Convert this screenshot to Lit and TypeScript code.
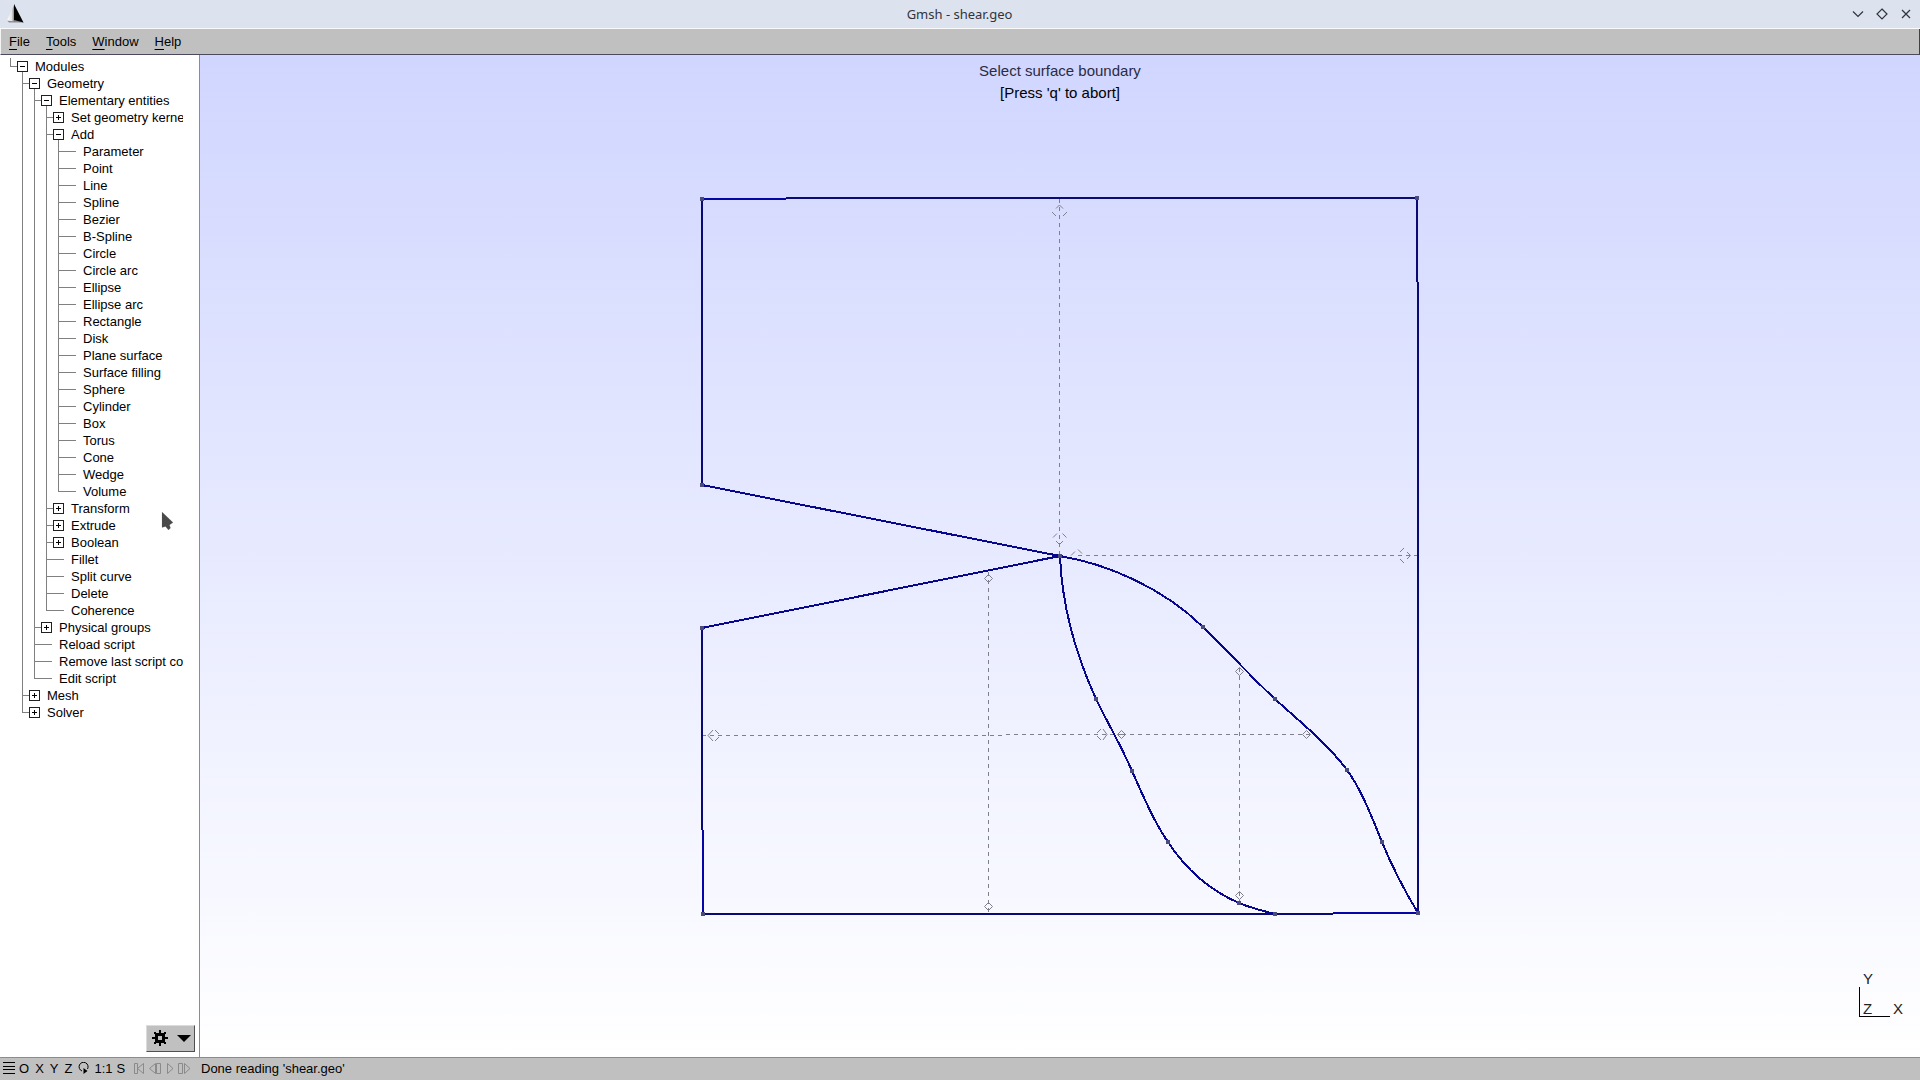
import { LitElement, html, svg, css, nothing, type TemplateResult } from "lit";
import { customElement, property, state } from "lit/decorators.js";

interface TreeNode {
  label: string;
  children?: TreeNode[];
  open?: boolean;
}

const leaf = (label: string): TreeNode => ({ label });
const closed = (label: string): TreeNode => ({ label, children: [], open: false });
const open = (label: string, children: TreeNode[]): TreeNode => ({ label, children, open: true });

const MODULES: TreeNode = open("Modules", [
  open("Geometry", [
    open("Elementary entities", [
      closed("Set geometry kernel"),
      open(
        "Add",
        [
          "Parameter", "Point", "Line", "Spline", "Bezier", "B-Spline", "Circle",
          "Circle arc", "Ellipse", "Ellipse arc", "Rectangle", "Disk",
          "Plane surface", "Surface filling", "Sphere", "Cylinder", "Box",
          "Torus", "Cone", "Wedge", "Volume",
        ].map(leaf),
      ),
      closed("Transform"),
      closed("Extrude"),
      closed("Boolean"),
      leaf("Fillet"),
      leaf("Split curve"),
      leaf("Delete"),
      leaf("Coherence"),
    ]),
    closed("Physical groups"),
    leaf("Reload script"),
    leaf("Remove last script command"),
    leaf("Edit script"),
  ]),
  closed("Mesh"),
  closed("Solver"),
]);

@customElement("module-tree")
export class ModuleTree extends LitElement {
  @property({ attribute: false }) root: TreeNode = MODULES;

  static styles = css`
    :host {
      display: block;
      overflow: hidden;
    }
    ul {
      list-style: none;
      margin: 0;
      padding: 0 0 0 12px;
    }
    .root {
      padding: 0 0 0 10px;
    }
    li {
      background: linear-gradient(#808080, #808080) no-repeat 0 0 / 1px 100%;
    }
    li:last-child {
      background-size: 1px 9px;
    }
    .row {
      display: flex;
      align-items: center;
      gap: 7px;
      width: 100%;
      height: 17px;
      margin: 0;
      padding: 0;
      border: 0;
      background: none;
      font: 13px/17px "Liberation Sans", Arial, sans-serif;
      color: #000;
      text-align: left;
      white-space: nowrap;
    }
    .row.open {
      background: linear-gradient(#808080, #808080) no-repeat 12px 14px / 1px 3px;
    }
    .mark {
      flex: none;
      display: block;
    }
  `;

  private toggle(node: TreeNode) {
    if (node.children) {
      node.open = !node.open;
      this.requestUpdate();
    }
  }

  private mark(node: TreeNode) {
    const branch = node.children !== undefined;
    return html`<svg class="mark" width="18" height="17" viewBox="0 0 18 17" aria-hidden="true" shape-rendering="crispEdges">
      <path d=${branch ? "M0 8.5H7" : "M0 8.5H18"} stroke="#808080" />
      ${branch
        ? svg`<rect x="7.5" y="3.5" width="10" height="10" fill="#fff" stroke="#202020" />
            <path d=${node.open ? "M10 8.5h5" : "M10 8.5h5M12.5 6v5"} stroke="#000" />`
        : nothing}
    </svg>`;
  }

  private item(node: TreeNode): TemplateResult {
    const branch = node.children !== undefined;
    return html`<li role="none">
      <button
        class="row ${node.open ? "open" : ""}"
        role="treeitem"
        aria-expanded=${branch ? String(!!node.open) : nothing}
        @click=${() => this.toggle(node)}
      >${this.mark(node)}<span>${node.label}</span></button>
      ${node.open ? html`<ul role="group">${node.children!.map((c) => this.item(c))}</ul>` : nothing}
    </li>`;
  }

  render() {
    return html`<ul class="root" role="tree" aria-label="Modules">${this.item(this.root)}</ul>`;
  }
}

const OUTLINE = [
  "M786 198H1417",
  "M1417 197V282",
  "M1418 282V914",
  "M703 914H1333",
  "M702 628V830",
  "M702 198V485",
].join("");

const OUTLINE_LIGHT = "M702 199H786M703 830V914M1333 913H1418";

const NOTCH = "M702 485L1060 556L702 628";

const SPLINES = [
  "M1060 556C1108 564 1163 588 1203 627C1227 650 1251 677 1275 699C1299 721 1327 743 1347 770C1361 789 1371 815 1382 842C1393 869 1406 893 1418 913",
  "M1060 556C1062 608 1076 655 1096 699C1108 724 1121 745 1132 771C1142 793 1153 821 1168 842C1185 868 1209 890 1239 903C1251 908 1263 911 1275 914",
].join("");

const POINTS: [number, number][] = [
  [702, 199], [1417, 198], [702, 485], [702, 628], [1060, 556],
  [1203, 627], [1275, 699], [1347, 770], [1382, 842], [1418, 913],
  [1096, 699], [1132, 771], [1168, 842], [1239, 903], [1275, 914], [703, 914],
];

const CROSSES = [
  "M1059.5 199V556",
  "M1418 555.5H1074",
  "M988.5 572V914",
  "M702 735.5H1003",
  "M1006 734.5H1122",
  "M1122 734.5H1314",
  "M1239.5 668V904",
].join("");

/* Small diamonds close the short surface crosses; HANDLES holds the larger, broken ones. */
const SMALL_DIAMONDS: [number, number][] = [
  [988.5, 578.5], [988.5, 906.5], [1239.5, 671.5], [1239.5, 895.5], [1121.5, 734.5], [1306.5, 734.5],
];

const HANDLES = [
  "M1056 208.5l3.5-3.5l3.5 3.5M1052 212l4 4M1067 212l-4 4",
  "M1056 541l3.5 3.5l3.5-3.5M1053 537.5l4-4M1066.5 537.5l-4-4",
  "M1071 555.5l4-4M1078 549.5l4 4",
  "M1407 552l3.5 3.5l-3.5 3.5M1404 548l-4 4M1404 563l-4-4",
  "M713 730l-5 5.5l5 5.5M715 730l4 4M715 741l4-4",
  "M1101 729l-4 4M1103 729l4 5.5l-4 5.5M1101 740l-4-4",
].join("");

@customElement("geometry-view")
export class GeometryView extends LitElement {
  static styles = css`
    :host {
      display: grid;
      background: linear-gradient(#d0d6ff, #fff);
      overflow: hidden;
    }
    .scene,
    .prompt {
      grid-area: 1 / 1;
    }
    .scene {
      width: 100%;
      height: 100%;
      min-height: 0;
      display: block;
    }
    .prompt {
      justify-self: center;
      align-self: start;
      margin: 0;
      padding: 5px 0 0;
      font: 15px/22px "Liberation Sans", Arial, sans-serif;
      color: #000;
      text-align: center;
    }
    .message {
      color: #2a2c42;
      display: block;
    }
    .axis {
      font: 15px "Liberation Sans", Arial, sans-serif;
      fill: #222;
    }
  `;

  render() {
    return html`
      <svg class="scene" viewBox="200 55 1720 1002" role="img" aria-label="shear.geo">
        <g fill="none" stroke="#80808c" stroke-width="1">
          <path d=${CROSSES} stroke-dasharray="4 4" shape-rendering="crispEdges" />
          ${SMALL_DIAMONDS.map(([x, y]) => svg`<path d=${`M${x - 4} ${y}l4-4l4 4l-4 4z`} />`)}
          <path d=${HANDLES} />
        </g>
        <g fill="none" stroke-width="2" shape-rendering="crispEdges">
          <path d=${OUTLINE} stroke="#0a0a74" />
          <path d=${OUTLINE_LIGHT} stroke="#0606a8" />
          <path d=${NOTCH} stroke="#06068e" />
          <path d=${SPLINES} stroke="#06068e" />
        </g>
        <g fill="#4c4c7c">
          ${POINTS.map(([x, y]) => svg`<rect x=${x - 2} y=${y - 2} width="4" height="4" />`)}
        </g>
        <path d="M1859.5 987V1016.5H1890" fill="none" stroke="#000" shape-rendering="crispEdges" />
        <g class="axis">
          <text x="1863" y="984">Y</text>
          <text x="1863" y="1014">Z</text>
          <text x="1893" y="1014">X</text>
        </g>
      </svg>
      <p class="prompt"><span class="message">Select surface boundary</span>[Press 'q' to abort]</p>
    `;
  }
}

@customElement("app-root")
export class AppRoot extends LitElement {
  @state() private status = "Done reading 'shear.geo'";

  static styles = css`
    :host {
      display: flex;
      flex-direction: column;
      height: 100vh;
      background: #fff;
      font: 13px/17px "Liberation Sans", Arial, sans-serif;
      color: #000;
    }
    button {
      margin: 0;
      padding: 0;
      border: 0;
      background: none;
      font: inherit;
      color: inherit;
      display: block;
    }
    svg {
      display: block;
    }
    .titlebar {
      display: grid;
      grid-template-columns: 1fr auto 1fr;
      align-items: center;
      height: 28px;
      padding: 0 8px 0 7px;
      background: #dde3ee;
      border-bottom: 1px solid #fafafa;
      color: #30343c;
    }
    .title {
      margin: 0;
      font: 13px/18px "Noto Sans", sans-serif;
    }
    .window-buttons {
      display: flex;
      justify-content: flex-end;
      gap: 12px;
    }
    .menubar {
      display: flex;
      gap: 16px;
      height: 25px;
      align-items: center;
      padding: 0 8px;
      background: #c0c0c0;
      border-left: 1px solid #f4f4f4;
      border-right: 1px solid #404048;
      border-bottom: 1px solid #4a4a5c;
    }
    .menubar u {
      text-underline-offset: 3px;
    }
    .workspace {
      flex: 1;
      min-height: 0;
      display: grid;
      grid-template-columns: 200px 1fr;
    }
    .sidebar {
      display: flex;
      flex-direction: column;
      min-height: 0;
      padding: 3px 0 5px;
      border-right: 1px solid #8c8c8c;
    }
    .tree {
      flex: 1;
      min-height: 0;
      margin-right: 16px;
    }
    .options {
      align-self: flex-end;
      display: flex;
      align-items: center;
      margin-right: 4px;
      height: 27px;
      box-sizing: border-box;
      padding: 0 3px 1px 5px;
      gap: 9px;
      background: #c0c0c0;
      border: 1px solid;
      border-color: #dcdcdc #505050 #505050 #dcdcdc;
    }
    .statusbar {
      display: flex;
      align-items: center;
      height: 22px;
      padding: 0 3px;
      box-sizing: border-box;
      background: #c0c0c0;
      border-top: 1px solid #8c8c8c;
      line-height: 15px;
      padding-bottom: 2px;
      min-height: 23px;
    }
    .views {
      display: flex;
      align-items: center;
      gap: 4px;
      width: 198px;
    }
    .axes {
      display: flex;
      gap: 6px;
      padding-right: 2px;
    }
    .player {
      display: flex;
      gap: 4px;
      padding-left: 4px;
    }
    .pointer {
      position: absolute;
      left: 161px;
      top: 511px;
      pointer-events: none;
    }
  `;

  render() {
    return html`
      <header class="titlebar">
        <svg width="18" height="20" viewBox="0 0 18 20" aria-hidden="true">
          <defs>
            <linearGradient id="face" x1="0" y1="0" x2="1" y2="0">
              <stop offset="0" stop-color="#fff" /><stop offset="0.6" stop-color="#e4e4e4" /><stop offset="1" stop-color="#777" />
            </linearGradient>
          </defs>
          <path d="M0 16.5L8 15L17 18.5H2Z" fill="#666" opacity="0.7" />
          <path d="M7.5 0L0 16.500L7.500 17.500Z" fill="url(#face)" />
          <path d="M7 0L16.500 18.500L7 16Z" fill="#000" />
        </svg>
        <h1 class="title">Gmsh - shear.geo</h1>
        <div class="window-buttons">
          <button aria-label="Minimize"><svg width="12" height="12" viewBox="0 0 12 12" fill="none" stroke="#30343c" stroke-width="1.200"><path d="M1 3.500L6 8.500L11 3.500" /></svg></button>
          <button aria-label="Maximize"><svg width="12" height="12" viewBox="0 0 12 12" fill="none" stroke="#30343c" stroke-width="1.200"><path d="M6 1L11 6L6 11L1 6Z" /></svg></button>
          <button aria-label="Close"><svg width="12" height="12" viewBox="0 0 12 12" fill="none" stroke="#30343c" stroke-width="1.200"><path d="M2 2L10 10M10 2L2 10" /></svg></button>
        </div>
      </header>
      <nav class="menubar">
        <button><u>F</u>ile</button>
        <button><u>T</u>ools</button>
        <button><u>W</u>indow</button>
        <button><u>H</u>elp</button>
      </nav>
      <main class="workspace">
        <aside class="sidebar">
          <module-tree class="tree"></module-tree>
          <button class="options" aria-label="Options">
            <svg width="16" height="16" viewBox="0 0 16 16" shape-rendering="crispEdges" aria-hidden="true">
              <rect x="4.500" y="4.500" width="7" height="7" fill="none" stroke="#000" stroke-width="3" />
              <path d="M7 0h2v3H7zM7 13h2v3H7zM0 7h3v2H0zM13 7h3v2h-3zM2 2h2v2H2zM12 2h2v2h-2zM2 12h2v2H2zM12 12h2v2h-2z" />
            </svg>
            <svg width="14" height="7" viewBox="0 0 14 7" aria-hidden="true"><path d="M0 0H14L7 7Z" /></svg>
          </button>
        </aside>
        <geometry-view></geometry-view>
      </main>
      <footer class="statusbar">
        <div class="views">
          <button aria-label="Menu"><svg width="12" height="12" viewBox="0 0 12 12" stroke="#000" shape-rendering="crispEdges"><path d="M0 .5h12M0 4.500h12M0 7.500h12M0 11.500h12" /></svg></button>
          <div class="axes">
            <button>O</button>
            <button>X</button>
            <button>Y</button>
            <button>Z</button>
          </div>
          <button aria-label="Rotate"><svg width="12" height="12" viewBox="0 0 12 12" fill="none" stroke="#000"><path d="M4 9A4.500 4.500 0 1 1 9.500 7" /><path d="M5.500 6v6l4-3z" fill="#000" stroke="none" /></svg></button>
          <button>1:1</button>
          <button>S</button>
          <div class="player">
            <button aria-label="First"><svg width="12" height="13" viewBox="0 0 12 13" fill="none" stroke="#8a8a8a"><path d="M1.500 1.500h3v10h-3zM10.500 1.500v10L4.500 6.500z" /></svg></button>
            <button aria-label="Previous"><svg width="12" height="13" viewBox="0 0 12 13" fill="none" stroke="#8a8a8a"><path d="M7.500 1.500h4v10h-4zM6.500 1.500v10L.5 6.500z" /></svg></button>
            <button aria-label="Play"><svg width="9" height="13" viewBox="0 0 9 13" fill="none" stroke="#8a8a8a"><path d="M2.500 1.500v10L8 6.500z" /></svg></button>
            <button aria-label="Next"><svg width="13" height="13" viewBox="0 0 13 13" fill="none" stroke="#8a8a8a"><path d="M.5 1.500h4v10h-4zM6.500 1.500v10L12 6.500z" /></svg></button>
          </div>
        </div>
        <output>${this.status}</output>
      </footer>
      <svg class="pointer" width="14" height="22" viewBox="0 0 14 22" aria-hidden="true">
        <path d="M1 1V16.500L4.500 15.500L7.500 19L9.500 17L8.500 14L12 11.500Z" fill="#4a4a4a" stroke="#e8e8e8" stroke-width="1" paint-order="stroke" />
      </svg>
    `;
  }
}
